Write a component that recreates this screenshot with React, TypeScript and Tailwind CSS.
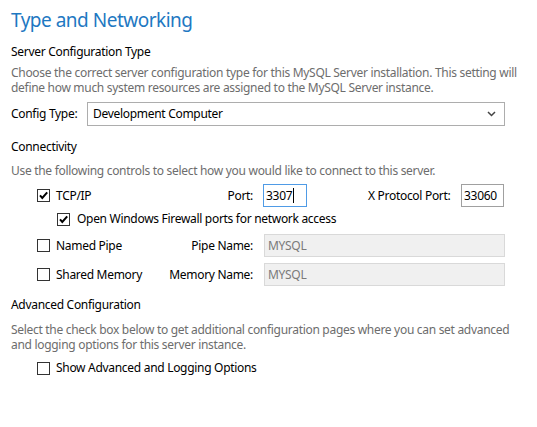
import React from "react";

function Check({ checked }: { checked?: boolean }) {
  return (
    <span className="relative inline-block h-[13px] w-[13px] shrink-0 border border-[#333333] bg-white">
      {checked && (
        <svg viewBox="0 0 11 11" className="absolute left-0 top-0 h-[11px] w-[11px]">
          <path d="M2 5.3 L4.3 7.9 L9.2 2.4" fill="none" stroke="#000" strokeWidth="2" />
        </svg>
      )}
    </span>
  );
}

export default function App() {
  return (
    <div className="h-[427px] w-[537px] bg-white pl-[11px] pt-[6px] font-['Noto_Sans',sans-serif] text-[12px] leading-[16px] tracking-[-0.3px] text-black">
      <div className="text-[19px] leading-[28px] tracking-[-0.5px] text-[#1e78c2]">Type and Networking</div>

      <div className="mt-[10px]">Server Configuration Type</div>
      <div className="mt-[5px] w-[515px] leading-[15px] text-[#6d6d6d]">
        Choose the correct server configuration type for this MySQL Server installation. This setting will define how much system resources are assigned to the MySQL Server instance.
      </div>

      <div className="mt-[7px] flex h-[24px] items-center">
        <div className="w-[76px]">Config Type:</div>
        <div className="flex h-[24px] w-[418px] items-center justify-between border border-[#adadad] bg-white pl-[5px] pr-[8px]">
          <span>Development Computer</span>
          <svg viewBox="0 0 9 6" className="h-[6px] w-[9px]">
            <path d="M1 1 L4.5 4.5 L8 1" fill="none" stroke="#444" strokeWidth="1.5" />
          </svg>
        </div>
      </div>

      <div className="mt-[13px]">Connectivity</div>
      <div className="mt-[8px] leading-[15px] text-[#6d6d6d]">
        Use the following controls to select how you would like to connect to this server.
      </div>

      <div className="mt-[6px] flex h-[23px] items-center pl-[26px]">
        <div className="flex w-[216px] items-center justify-between">
          <div className="flex items-center gap-[6px]">
            <Check checked />
            <span>TCP/IP</span>
          </div>
          <span>Port:</span>
        </div>
        <div className="ml-[10px] flex h-[23px] w-[44px] items-center border border-[#4f9be6] pl-[2px]">
          <span>3307</span>
          <span className="ml-[1px] inline-block h-[15px] w-[1px] bg-black" />
        </div>
        <div className="ml-[61px] w-[93px]">X Protocol Port:</div>
        <div className="flex h-[23px] w-[43px] items-center border border-[#a0a0a0] pl-[2px]">33060</div>
      </div>

      <div className="flex h-[24px] items-center pl-[46px]">
        <div className="flex items-center gap-[7px]">
          <Check checked />
          <span>Open Windows Firewall ports for network access</span>
        </div>
      </div>

      <div className="mt-[3px] flex h-[23px] items-center pl-[26px]">
        <div className="flex w-[216px] items-center justify-between">
          <div className="flex items-center gap-[6px]">
            <Check />
            <span>Named Pipe</span>
          </div>
          <span>Pipe Name:</span>
        </div>
        <div className="ml-[11px] flex h-[23px] w-[241px] items-center border border-[#d9d9d9] bg-[#f0f0f0] pl-[3px] text-[#7a7a7a]">
          MYSQL
        </div>
      </div>

      <div className="mt-[6px] flex h-[23px] items-center pl-[26px]">
        <div className="flex w-[216px] items-center justify-between">
          <div className="flex items-center gap-[6px]">
            <Check />
            <span>Shared Memory</span>
          </div>
          <span>Memory Name:</span>
        </div>
        <div className="ml-[11px] flex h-[23px] w-[241px] items-center border border-[#d9d9d9] bg-[#f0f0f0] pl-[3px] text-[#7a7a7a]">
          MYSQL
        </div>
      </div>

      <div className="mt-[11px]">Advanced Configuration</div>
      <div className="mt-[9px] w-[515px] leading-[15px] text-[#6d6d6d]">
        Select the check box below to get additional configuration pages where you can set advanced and logging options for this server instance.
      </div>

      <div className="mt-[8px] flex h-[16px] items-center gap-[6px] pl-[26px]">
        <Check />
        <span>Show Advanced and Logging Options</span>
      </div>
    </div>
  );
}
